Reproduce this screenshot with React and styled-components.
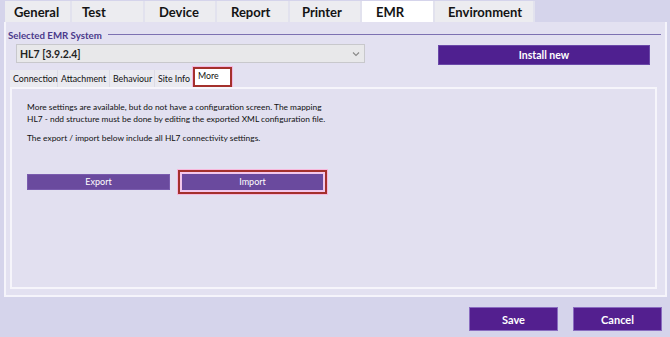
import React from 'react';
import styled, { createGlobalStyle } from 'styled-components';

const GlobalStyle = createGlobalStyle`
  html, body {
    margin: 0;
    padding: 0;
    background: #d5d4eb;
  }
  body {
    font-family: Lato, "Noto Sans", sans-serif;
  }
`;

const Page = styled.div`
  width: 670px;
  height: 337px;
  overflow: hidden;
  display: flex;
  flex-direction: column;
  background: #d5d4eb;
`;

const TabBar = styled.div`
  display: flex;
  height: 22px;
  padding: 1px 0 0 5px;
  box-sizing: border-box;
`;

const MainTab = styled.div`
  width: ${(p) => p.w}px;
  box-sizing: border-box;
  border-right: 2px solid #e2e2ee;
  background: ${(p) => (p.active ? '#ffffff' : '#ececf0')};
  font-size: 13px;
  font-weight: 700;
  color: #141414;
  display: flex;
  align-items: center;
  padding-left: ${(p) => p.pad}px;
`;

const Panel = styled.div`
  margin: 0 3px 0 4px;
  height: 275px;
  box-sizing: border-box;
  border: 2px solid #f5f4fb;
  border-top: none;
  background: #e3e1f1;
  padding: 5px 2px 0 2px;
  display: flex;
  flex-direction: column;
`;

const GroupHeader = styled.div`
  display: flex;
  align-items: center;
  gap: 6px;
  height: 15px;
`;

const GroupTitle = styled.span`
  font-size: 9.7px;
  font-weight: 700;
  color: #4a3a8c;
`;

const GroupLine = styled.div`
  flex: 1;
  height: 1px;
  background: #7d71b2;
  margin-right: 2px;
`;

const SystemRow = styled.div`
  display: flex;
  align-items: flex-start;
  padding: 2px 0 0 8px;
  height: 22px;
`;

const Select = styled.div`
  width: 349px;
  height: 19px;
  box-sizing: border-box;
  border: 1px solid #c8c8cc;
  background: #e8e8ea;
  display: flex;
  align-items: center;
  justify-content: space-between;
  padding: 0 4px 0 3px;
  font-size: 10.5px;
  font-weight: 700;
  color: #222;
`;

const Chevron = styled.svg`
  width: 8px;
  height: 6px;
`;

const PurpleButton = styled.div`
  box-sizing: border-box;
  width: ${(p) => p.w}px;
  height: ${(p) => p.h}px;
  background: ${(p) => p.bg || '#4f2090'};
  border: 1px solid ${(p) => p.edge || '#6a48a8'};
  color: #fff;
  font-size: ${(p) => p.fs || 11}px;
  font-weight: ${(p) => p.fw || 700};
  display: flex;
  align-items: center;
  justify-content: center;
`;

const InstallSlot = styled.div`
  margin-left: 73px;
  margin-top: 1px;
`;

const SubTabBar = styled.div`
  display: flex;
  margin: 1px 0 0 2px;
  height: 20px;
  align-items: flex-end;
`;

const SubTab = styled.div`
  box-sizing: border-box;
  width: ${(p) => p.w}px;
  height: ${(p) => (p.marked ? 20 : 17)}px;
  background: ${(p) => (p.marked ? '#ffffff' : '#eaeaf0')};
  border-right: 1px solid #dcdce6;
  border: ${(p) => (p.marked ? '2px solid #a4302c' : undefined)};
  box-shadow: ${(p) => (p.marked ? '0 0 0 1px #f3b8e0' : 'none')};
  font-size: 8.8px;
  color: #111;
  display: flex;
  align-items: center;
  padding-left: 3px;
  padding-bottom: ${(p) => (p.marked ? 3 : 0)}px;
`;

const Inner = styled.div`
  margin-left: 2px;
  width: 647px;
  height: 202px;
  box-sizing: border-box;
  border: 2px solid #f6f5fb;
  background: #e2e0f0;
  padding: 13px 0 0 15px;
  display: flex;
  flex-direction: column;
`;

const Para = styled.p`
  margin: 0 0 ${(p) => p.mb || 0}px 0;
  font-size: 8.4px;
  line-height: 11.5px;
  color: #111;
`;

const ActionRow = styled.div`
  display: flex;
  align-items: center;
  margin-top: 25px;
  gap: 8px;
`;

const MarkFrame = styled.div`
  padding: 1px;
  border: 2px solid #a4302c;
  box-shadow: 0 0 0 1px #f7b9dc, inset 0 0 0 1px #f5c8ea;
`;

const Footer = styled.div`
  flex: 1;
  display: flex;
  justify-content: flex-end;
  align-items: flex-start;
  padding: 10px 8px 0 0;
  gap: 15px;
`;

const mainTabs = [
  { label: 'General', w: 67, pad: 9 },
  { label: 'Test', w: 73, pad: 10 },
  { label: 'Device', w: 72, pad: 14 },
  { label: 'Report', w: 73, pad: 14 },
  { label: 'Printer', w: 72, pad: 12 },
  { label: 'EMR', w: 73, pad: 14, active: true },
  { label: 'Environment', w: 100, pad: 13 },
];

const subTabs = [
  { label: 'Connection', w: 48 },
  { label: 'Attachment', w: 52 },
  { label: 'Behaviour', w: 45 },
  { label: 'Site Info', w: 38 },
  { label: 'More', w: 39, marked: true },
];

export default function App() {
  return (
    <Page>
      <GlobalStyle />
      <TabBar>
        {mainTabs.map((t) => (
          <MainTab key={t.label} w={t.w} pad={t.pad} active={t.active}>
            {t.label}
          </MainTab>
        ))}
      </TabBar>
      <Panel>
        <GroupHeader>
          <GroupTitle>Selected EMR System</GroupTitle>
          <GroupLine />
        </GroupHeader>
        <SystemRow>
          <Select>
            HL7 [3.9.2.4]
            <Chevron viewBox="0 0 8 6">
              <path d="M1 1.5 L4 4.5 L7 1.5" fill="none" stroke="#888" strokeWidth="1.1" />
            </Chevron>
          </Select>
          <InstallSlot>
            <PurpleButton w={212} h={20} fs={10.5}>Install new</PurpleButton>
          </InstallSlot>
        </SystemRow>
        <SubTabBar>
          {subTabs.map((t) => (
            <SubTab key={t.label} w={t.w} marked={t.marked}>
              {t.label}
            </SubTab>
          ))}
        </SubTabBar>
        <Inner>
          <Para>
            More settings are available, but do not have a configuration screen. The mapping
          </Para>
          <Para mb={8}>
            HL7 - ndd structure must be done by editing the exported XML configuration file.
          </Para>
          <Para>The export / import below include all HL7 connectivity settings.</Para>
          <ActionRow>
            <PurpleButton w={143} h={16} bg="#6a4a9e" edge="#7a5cae" fs={9} fw={400}>
              Export
            </PurpleButton>
            <MarkFrame>
              <PurpleButton w={143} h={18} bg="#6a4a9e" edge="#f0c6ec" fs={9} fw={400}>
                Import
              </PurpleButton>
            </MarkFrame>
          </ActionRow>
        </Inner>
      </Panel>
      <Footer>
        <PurpleButton w={89} h={24} bg="#531f8f" edge="#8a6cc0">Save</PurpleButton>
        <PurpleButton w={89} h={24} bg="#531f8f" edge="#8a6cc0">Cancel</PurpleButton>
      </Footer>
    </Page>
  );
}
